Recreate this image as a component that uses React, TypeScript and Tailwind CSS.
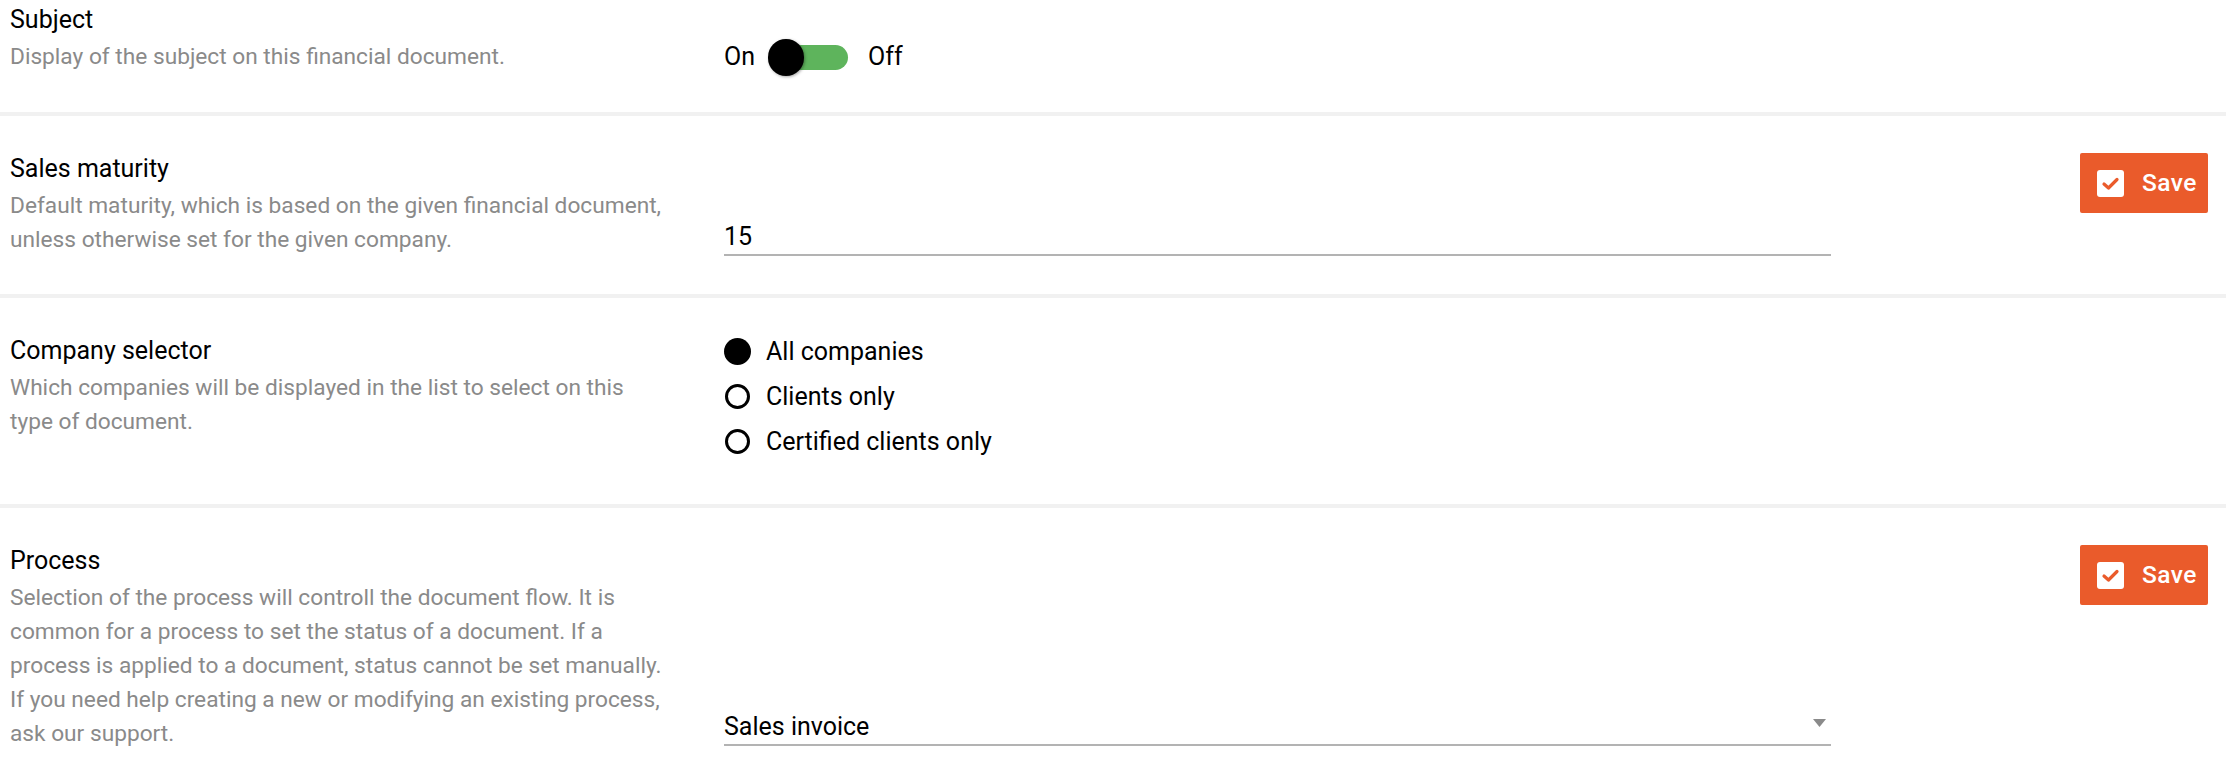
import React from "react";

function SaveButton() {
  return (
    <button className="mt-[4px] flex h-[60px] w-[128px] items-center rounded-[2px] bg-[#ea5b2b] pl-[17px] text-white">
      <span className="flex h-[27px] w-[27px] items-center justify-center rounded-[3px] bg-white">
        <svg width="27" height="27" viewBox="0 0 27 27" fill="none">
          <path d="M7 14 L11.5 18 L20 9.5" stroke="#ea5b2b" strokeWidth="3.2" strokeLinecap="round" strokeLinejoin="round" />
        </svg>
      </span>
      <span className="ml-[18px] text-[24.5px] font-medium leading-none tracking-[0.5px]">Save</span>
    </button>
  );
}

function Label({ title, lines }: { title: string; lines: string[] }) {
  return (
    <div className="w-[724px] shrink-0 pl-[10px]">
      <div className="text-[25px] leading-[40px] text-black">{title}</div>
      <div className="text-[22.7px] leading-[34px] text-[#8a8a8a]">
        {lines.map((l, i) => (
          <div key={i} className="whitespace-nowrap">
            {l}
          </div>
        ))}
      </div>
    </div>
  );
}

function Radio({ checked, label }: { checked?: boolean; label: string }) {
  return (
    <div className="flex h-[45px] items-center">
      <span className="flex h-[27px] w-[27px] items-center justify-center">
        {checked ? (
          <span className="block h-[27px] w-[27px] rounded-full bg-black" />
        ) : (
          <span className="block h-[25px] w-[25px] rounded-full border-[3px] border-black" />
        )}
      </span>
      <span className="ml-[15px] text-[25px] leading-[34px] text-black">{label}</span>
    </div>
  );
}

export default function App() {
  return (
    <div className="min-h-screen w-full bg-white font-['Roboto','Noto_Sans',sans-serif]">
      {/* Subject */}
      <div className="flex border-b-[4px] border-[#f1f1f1] pb-[38px]">
        <Label title="Subject" lines={["Display of the subject on this financial document."]} />
        <div className="flex h-[34px] items-center self-end">
          <span className="text-[25px] leading-[34px] text-black">On</span>
          <div className="relative ml-[13px] h-[37px] w-[80px]">
            <div className="absolute left-[7px] top-[6px] h-[25px] w-[73px] rounded-full bg-[#5eb45c]" />
            <div className="absolute left-0 top-0 h-[37px] w-[36px] rounded-full bg-black shadow-[1px_1px_3px_rgba(0,0,0,0.35)]" />
          </div>
          <span className="ml-[20px] text-[25px] leading-[34px] text-black">Off</span>
        </div>
      </div>

      {/* Sales maturity */}
      <div className="flex border-b-[4px] border-[#f1f1f1] pb-[37px] pt-[33px]">
        <Label
          title="Sales maturity"
          lines={[
            "Default maturity, which is based on the given financial document,",
            "unless otherwise set for the given company.",
          ]}
        />
        <div className="mb-[1px] w-[1107px] shrink-0 self-end border-b-[2px] border-[#b3b3b3]">
          <div className="text-[25px] leading-[34px] text-black">15</div>
        </div>
        <div className="flex flex-1 justify-end self-start pr-[18px]">
          <SaveButton />
        </div>
      </div>

      {/* Company selector */}
      <div className="flex border-b-[4px] border-[#f1f1f1] pb-[40px] pt-[33px]">
        <Label
          title="Company selector"
          lines={[
            "Which companies will be displayed in the list to select on this",
            "type of document.",
          ]}
        />
        <div className="-mt-[2px] flex flex-col">
          <Radio checked label="All companies" />
          <Radio label="Clients only" />
          <Radio label="Certified clients only" />
        </div>
      </div>

      {/* Process */}
      <div className="flex pb-[37px] pt-[33px]">
        <Label
          title="Process"
          lines={[
            "Selection of the process will controll the document flow. It is",
            "common for a process to set the status of a document. If a",
            "process is applied to a document, status cannot be set manually.",
            "If you need help creating a new or modifying an existing process,",
            "ask our support.",
          ]}
        />
        <div className="mb-[5px] flex w-[1107px] shrink-0 items-center justify-between self-end border-b-[2px] border-[#b3b3b3]">
          <div className="text-[25px] leading-[34px] text-black">Sales invoice</div>
          <svg className="mb-[8px] mr-[5px]" width="13" height="8" viewBox="0 0 13 8">
            <path d="M0 0 H13 L6.5 8 Z" fill="#8a8a8a" />
          </svg>
        </div>
        <div className="flex flex-1 justify-end self-start pr-[18px]">
          <SaveButton />
        </div>
      </div>
    </div>
  );
}
